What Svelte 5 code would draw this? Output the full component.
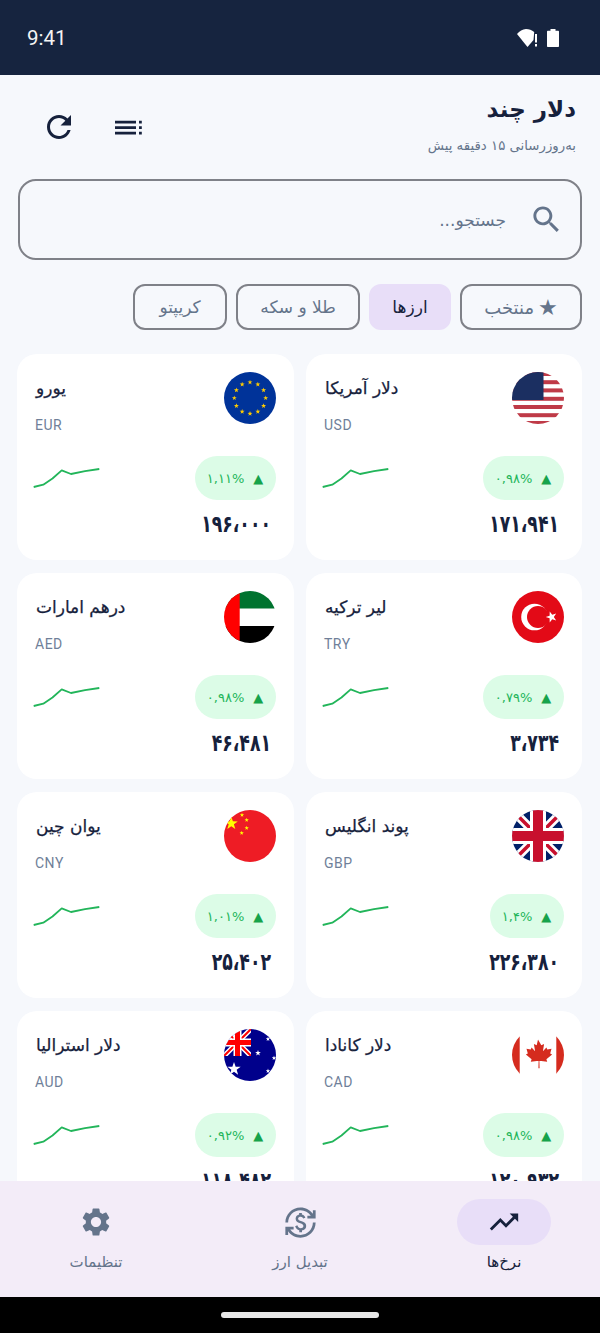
<script>
  const star = (cx, cy, r, rot = -90) => {
    const pts = [];
    for (let i = 0; i < 10; i++) {
      const rad = i % 2 ? r * 0.4 : r;
      const a = ((rot + i * 36) * Math.PI) / 180;
      pts.push(`${(cx + rad * Math.cos(a)).toFixed(2)},${(cy + rad * Math.sin(a)).toFixed(2)}`);
    }
    return pts.join(' ');
  };
  const euStars = Array.from({ length: 12 }, (_, i) => {
    const a = (i * 30 * Math.PI) / 180;
    return star(26 + 15.7 * Math.sin(a), 26 - 15.7 * Math.cos(a), 2.6);
  });
  const usStripes = [0, 8.2, 16.4, 24.8, 33, 41.2, 49];

  const rates = [
    { name: 'دلار آمریکا', code: 'USD', change: '۰,۹۸%', price: '۱۷۱،۹۴۱' },
    { name: 'یورو', code: 'EUR', change: '۱,۱۱%', price: '۱۹۶،۰۰۰' },
    { name: 'لیر ترکیه', code: 'TRY', change: '۰,۷۹%', price: '۳،۷۳۴' },
    { name: 'درهم امارات', code: 'AED', change: '۰,۹۸%', price: '۴۶،۴۸۱' },
    { name: 'پوند انگلیس', code: 'GBP', change: '۱,۴%', price: '۲۲۶،۳۸۰' },
    { name: 'یوان چین', code: 'CNY', change: '۱,۰۱%', price: '۲۵،۴۰۲' },
    { name: 'دلار کانادا', code: 'CAD', change: '۰,۹۸%', price: '۱۲۰،۹۳۲' },
    { name: 'دلار استرالیا', code: 'AUD', change: '۰,۹۲%', price: '۱۱۸،۴۸۲' }
  ];
</script>

{#snippet flag(code)}
  <svg class="flag" viewBox="0 0 52 52" aria-hidden="true">
    <defs>
      <clipPath id="clip-{code}"><circle cx="26" cy="26" r="26" /></clipPath>
      <clipPath id="union-{code}"><rect width="27" height="27" /></clipPath>
    </defs>
    <g clip-path="url(#clip-{code})">
      {#if code === 'USD'}
        <rect width="52" height="52" fill="#fff" />
        {#each usStripes as y}<rect x="0" {y} width="52" height="4" fill="#bf3a47" />{/each}
        <rect width="31.500" height="28" fill="#1b2f61" />
      {:else if code === 'EUR'}
        <rect width="52" height="52" fill="#003399" />
        {#each euStars as points}<polygon {points} fill="#ffcc00" />{/each}
      {:else if code === 'TRY'}
        <rect width="52" height="52" fill="#e30a17" />
        <circle cx="22.5" cy="26" r="13.3" fill="#fff" />
        <circle cx="26" cy="26" r="11" fill="#e30a17" />
        <polygon points={star(39.5, 26, 5.8, 180)} fill="#fff" />
      {:else if code === 'AED'}
        <rect width="52" height="52" fill="#fff" />
        <rect width="52" height="17.500" fill="#00732f" />
        <rect y="35" width="52" height="17" fill="#000" />
        <rect width="15.700" height="52" fill="#ff0000" />
      {:else if code === 'GBP'}
        <rect width="52" height="52" fill="#012169" />
        <path d="M0 0L52 52M52 0L0 52" stroke="#fff" stroke-width="9" />
        <path d="M0 0L52 52M52 0L0 52" stroke="#c8102e" stroke-width="3.5" />
        <path d="M26 0V52M0 26H52" stroke="#fff" stroke-width="16" />
        <path d="M26 0V52M0 26H52" stroke="#c8102e" stroke-width="10" />
      {:else if code === 'CNY'}
        <rect width="52" height="52" fill="#ee1c25" />
        <polygon points={star(7.3, 13.5, 6.8)} fill="#ffff00" />
        <polygon points={star(18, 5, 2.3)} fill="#ffff00" />
        <polygon points={star(22.7, 10, 2.3)} fill="#ffff00" />
        <polygon points={star(22.7, 18, 2.3)} fill="#ffff00" />
        <polygon points={star(17.7, 23, 2.3)} fill="#ffff00" />
      {:else if code === 'CAD'}
        <rect width="52" height="52" fill="#fff" />
        <rect width="7.700" height="52" fill="#d52b1e" />
        <rect x="44.300" width="7.700" height="52" fill="#d52b1e" />
        <rect y="0" width="52" height="8" fill="#fff" />
        <rect y="44.700" width="52" height="7.300" fill="#fff" />
        <path fill="#d52b1e" transform="translate(0 4)" d="M26 6.500l3.300 5.800 2.800-1.300-1.200 7.200 3.500-3.600.9 2 4.200-.8-1.300 4.600 1.900 1-5.700 4.800.8 2.600-6-.9-1.800.1.200 7.300h-1.200l.2-7.300-1.800-.1-6 .9.800-2.600-5.700-4.800 1.900-1-1.300-4.600 4.200.8.900-2 3.500 3.600-1.200-7.200 2.800 1.300z" />
      {:else}
        <rect width="52" height="52" fill="#00008b" />
        <g clip-path="url(#union-{code})">
          <path d="M0 0L27 27M27 0L0 27" stroke="#fff" stroke-width="5" />
          <path d="M0 0L27 27M27 0L0 27" stroke="#ff0000" stroke-width="2" />
          <path d="M13.5 0V27M0 13.5H27" stroke="#fff" stroke-width="8" />
          <path d="M13.5 0V27M0 13.5H27" stroke="#ff0000" stroke-width="5" />
        </g>
        <polygon points={star(10, 40, 7)} fill="#fff" />
        <polygon points={star(34, 24, 3)} fill="#fff" />
        <polygon points={star(44, 10, 2.4)} fill="#fff" />
        <polygon points={star(50, 29, 2.4)} fill="#fff" />
        <polygon points={star(44, 42, 2.4)} fill="#fff" />
      {/if}
    </g>
  </svg>
{/snippet}

<div class="screen">
  <header class="status">
    <span class="time">9:41</span>
    <div class="status-icons">
      <svg width="20" height="18" viewBox="0 0 20 18" aria-hidden="true">
        <path d="M0 5C2.500 2 5.500.3 9 0c3 0 5.800 1.100 8.200 3L16.500 11 10.500 18z" fill="#fff" />
        <rect x="18" y="5" width="2" height="8.500" fill="#fff" />
        <rect x="18" y="15" width="2" height="2.500" fill="#fff" />
      </svg>
      <svg width="12" height="18" viewBox="0 0 12 18" aria-hidden="true">
        <path d="M3.500 0h5v1.800h2.500c.6 0 1 .4 1 1V17c0 .6-.4 1-1 1H1c-.6 0-1-.4-1-1V2.800c0-.6.4-1 1-1h2.500z" fill="#fff" />
      </svg>
    </div>
  </header>

  <main class="content">
    <section class="top">
      <div class="titles">
        <h1>دلار چند</h1>
        <p>به‌روزرسانی ۱۵ دقیقه پیش</p>
      </div>
      <div class="actions">
        <svg class="menu" width="28" height="18" viewBox="0 0 28 18" aria-hidden="true">
          <path d="M1 2.800h21v2.800H1zM1 8.300h21v2.800H1zM1 13.800h21v2.800H1zM25 2.800h2.800v2.800H25zM25 8.300h2.800v2.800H25zM25 13.800h2.800v2.800H25z" fill="#16213c" />
        </svg>
        <svg width="36" height="36" viewBox="0 0 24 24" aria-hidden="true">
          <path fill="#16213c" d="M17.650 6.350C16.200 4.900 14.210 4 12 4c-4.420 0-7.990 3.580-7.990 8s3.570 8 7.990 8c3.730 0 6.840-2.550 7.730-6h-2.080c-.82 2.330-3.040 4-5.650 4-3.310 0-6-2.690-6-6s2.690-6 6-6c1.660 0 3.140.69 4.220 1.780L13 11h7V4l-2.350 2.350z" />
        </svg>
      </div>
    </section>

    <div class="search">
      <svg width="35" height="35" viewBox="0 0 24 24" aria-hidden="true">
        <path fill="#64748b" d="M15.500 14h-.79l-.28-.27C15.410 12.590 16 11.110 16 9.500 16 5.910 13.090 3 9.500 3S3 5.910 3 9.500 5.910 16 9.500 16c1.610 0 3.090-.59 4.230-1.570l.27.28v.79l5 4.990L20.490 19l-4.990-5zm-6 0C7.010 14 5 11.990 5 9.500S7.010 5 9.500 5 14 7.010 14 9.500 11.990 14 9.500 14z" />
      </svg>
      <span>جستجو...</span>
    </div>

    <div class="chips">
      <span class="chip fav"><b>★</b> منتخب</span>
      <span class="chip active">ارزها</span>
      <span class="chip gold">طلا و سکه</span>
      <span class="chip crypto">کریپتو</span>
    </div>

    <div class="grid">
      {#each rates as r}
        <article class="card">
          <div class="head">
            {@render flag(r.code)}
            <div class="names">
              <div class="name">{r.name}</div>
              <div class="code">{r.code}</div>
            </div>
          </div>
          <div class="mid">
            <div class="badge"><i>▲</i><span>{r.change}</span></div>
            <svg class="spark" width="68" height="22" viewBox="0 0 68 22" aria-hidden="true">
              <path d="M.7 20L10.300 17.700 19.500 11.500 28.700 3.300 38 7 52 4.200 66.300 2" fill="none" stroke="#22b55a" stroke-width="1.800" stroke-linejoin="round" />
            </svg>
          </div>
          <div class="price">{r.price}</div>
        </article>
      {/each}
    </div>
  </main>

  <nav class="nav">
    <div class="item current">
      <div class="pill">
        <svg width="34" height="34" viewBox="0 0 24 24" aria-hidden="true">
          <path fill="#16213c" d="M16 6l2.290 2.290-4.880 4.880-4-4L2 16.590 3.410 18l6-6 4 4 6.300-6.290L22 12V6z" />
        </svg>
      </div>
      <span>نرخ‌ها</span>
    </div>
    <div class="item">
      <div class="pill">
        <svg width="33" height="33" viewBox="0 0 24 24" aria-hidden="true">
          <path fill="#64748b" d="M12.890 11.100c-1.780-.59-2.640-.96-2.640-1.900 0-1.020 1.110-1.390 1.810-1.390 1.310 0 1.790.99 1.900 1.340l1.580-.67c-.15-.44-.82-1.910-2.560-2.220V5h-2v1.260c-2.480.56-2.490 2.860-2.490 2.960 0 2.270 2.250 2.910 3.350 3.310 1.580.56 2.280 1.070 2.280 2.030 0 1.130-1.050 1.610-1.980 1.610-1.820 0-2.340-1.870-2.400-2.090l-1.660.67c.63 2.190 2.280 2.780 3.020 2.960V19h2v-1.240c.52-.09 3.020-.59 3.020-3.220.01-1.390-.6-2.610-3.230-3.440zM3 21H1v-6h6v2H4.520c1.610 2.410 4.360 4 7.480 4 4.970 0 9-4.030 9-9h2c0 6.080-4.920 11-11 11-3.720 0-7.010-1.850-9-4.670V21zm-2-9C1 5.920 5.920 1 12 1c3.720 0 7.010 1.850 9 4.670V3h2v6h-6V7h2.480C17.870 4.590 15.120 3 12 3c-4.970 0-9 4.030-9 9H1z" />
        </svg>
      </div>
      <span>تبدیل ارز</span>
    </div>
    <div class="item">
      <div class="pill">
        <svg width="34" height="34" viewBox="0 0 24 24" aria-hidden="true">
          <path fill="#64748b" d="M19.140 12.940c.04-.3.06-.61.06-.94 0-.32-.02-.64-.07-.94l2.030-1.580c.18-.14.23-.41.12-.61l-1.920-3.320c-.12-.22-.37-.29-.59-.22l-2.390.96c-.5-.38-1.030-.7-1.620-.94l-.36-2.540c-.04-.24-.24-.41-.48-.41h-3.840c-.24 0-.43.17-.47.41l-.36 2.540c-.59.24-1.130.57-1.620.94l-2.390-.96c-.22-.08-.47 0-.59.22L2.740 8.870c-.12.21-.08.47.12.61l2.030 1.580c-.05.3-.09.63-.09.94s.02.64.07.94l-2.030 1.580c-.18.14-.23.41-.12.61l1.920 3.320c.12.22.37.29.59.22l2.390-.96c.5.38 1.030.7 1.620.94l.36 2.540c.05.24.24.41.48.41h3.840c.24 0 .44-.17.47-.41l.36-2.540c.59-.24 1.130-.56 1.620-.94l2.390.96c.22.08.47 0 .59-.22l1.920-3.320c.12-.22.07-.47-.12-.61l-2.010-1.580zM12 15.600c-1.980 0-3.600-1.620-3.600-3.600s1.620-3.600 3.600-3.600 3.600 1.620 3.600 3.600-1.620 3.600-3.600 3.600z" />
        </svg>
      </div>
      <span>تنظیمات</span>
    </div>
  </nav>

  <footer class="gesture"><div class="handle"></div></footer>
</div>

<style>
  :global(body) {
    margin: 0;
  }
  .screen {
    width: 600px;
    height: 1333px;
    display: flex;
    flex-direction: column;
    overflow: hidden;
    background: #f6f8fc;
    font-family: "DejaVu Sans", "Noto Sans", sans-serif;
    color: #16213c;
  }
  .status {
    flex: 0 0 75px;
    box-sizing: border-box;
    background: #16243f;
    display: flex;
    justify-content: space-between;
    align-items: center;
    padding: 1px 41px 0 27px;
  }
  .time {
    font-family: Roboto, sans-serif;
    font-size: 20.5px;
    color: #f4f4f4;
  }
  .status-icons {
    display: flex;
    align-items: center;
    gap: 10px;
  }
  .content {
    flex: 1;
    min-height: 0;
    overflow: hidden;
    direction: rtl;
  }
  .top {
    display: flex;
    justify-content: space-between;
    padding: 15px 24px 0 41px;
    height: 90px;
    box-sizing: border-box;
  }
  h1 {
    margin: 0;
    font-size: 23px;
    line-height: 38px;
    font-weight: 700;
  }
  .titles p {
    margin: 7px 0 0;
    font-size: 13.3px;
    line-height: 22px;
    color: #64748b;
  }
  .actions {
    display: flex;
    align-items: center;
    gap: 37px;
    height: 74px;
  }
  .search {
    margin: 14px 18px 0;
    height: 81px;
    box-sizing: border-box;
    border: 2px solid #7f8188;
    border-radius: 18px;
    display: flex;
    align-items: center;
    gap: 23px;
    padding: 0 16px 0 0;
    font-size: 17px;
    color: #64748b;
  }
  .chips {
    display: flex;
    gap: 9px;
    margin: 24px 18px 0;
  }
  .chip {
    height: 46px;
    box-sizing: border-box;
    border: 2px solid #7f8188;
    border-radius: 12px;
    display: flex;
    align-items: center;
    justify-content: center;
    gap: 4px;
    font-size: 17px;
    color: #64748b;
  }
  .chip b {
    font-weight: 400;
    font-size: 22px;
  }
  .fav {
    width: 122px;
    font-size: 18px;
  }
  .active {
    width: 82px;
    border-color: #e8def8;
    background: #e8def8;
    color: #16213c;
  }
  .gold { width: 124px; }
  .crypto { width: 94px; }
  .grid {
    display: grid;
    grid-template-columns: 276px 277px;
    gap: 13px 12px;
    padding: 24px 18px 0 17px;
  }
  .card {
    height: 206px;
    box-sizing: border-box;
    background: #fff;
    border-radius: 20px;
    padding: 18px;
  }
  .head {
    display: flex;
    justify-content: space-between;
    height: 52px;
    padding-left: 1px;
  }
  .flag {
    width: 52px;
    height: 52px;
    display: block;
  }
  .names {
    display: flex;
    flex-direction: column;
    align-items: flex-end;
    padding-top: 2px;
  }
  .name {
    font-size: 17px;
    -webkit-text-stroke: 0.25px currentColor;
    line-height: 28px;
  }
  .code {
    font-family: Roboto, sans-serif;
    font-size: 14px;
    letter-spacing: 0.5px;
    line-height: 20px;
    margin-top: 13px;
    margin-left: -1px;
    color: #6f7f99;
    direction: ltr;
  }
  .mid {
    display: flex;
    justify-content: space-between;
    align-items: center;
    margin-top: 32px;
  }
  .badge {
    height: 44px;
    border-radius: 22px;
    background: #dcfce7;
    display: flex;
    align-items: center;
    gap: 9px;
    padding: 0 13px 0 12px;
    color: #22b55a;
    font-size: 13px;
    letter-spacing: -0.3px;
  }
  .badge i {
    font-style: normal;
    font-size: 13px;
    color: #16a34a;
  }
  .spark {
    display: block;
    margin-left: -2px;
  }
  .price {
    margin: 9px 5px 0 0;
    font-size: 24px;
    line-height: 30px;
    font-weight: 700;
    transform: scaleX(0.72);
    transform-origin: right center;
  }
  .nav {
    flex: 0 0 116px;
    box-sizing: border-box;
    background: #f3ecf8;
    display: flex;
    justify-content: space-between;
    direction: rtl;
    padding-top: 18px;
  }
  .item {
    width: 192px;
    display: flex;
    flex-direction: column;
    align-items: center;
    font-size: 15px;
    color: #64748b;
  }
  .pill {
    width: 94px;
    height: 46px;
    border-radius: 23px;
    display: flex;
    align-items: center;
    justify-content: center;
    margin-bottom: 8px;
  }
  .current { color: #16213c; }
  .current .pill { background: #e8def8; }
  .gesture {
    flex: 0 0 36px;
    background: #000;
    display: flex;
    justify-content: center;
    padding-top: 15px;
    box-sizing: border-box;
  }
  .handle {
    width: 158px;
    height: 6px;
    border-radius: 3px;
    background: #e8e8e8;
  }
</style>
